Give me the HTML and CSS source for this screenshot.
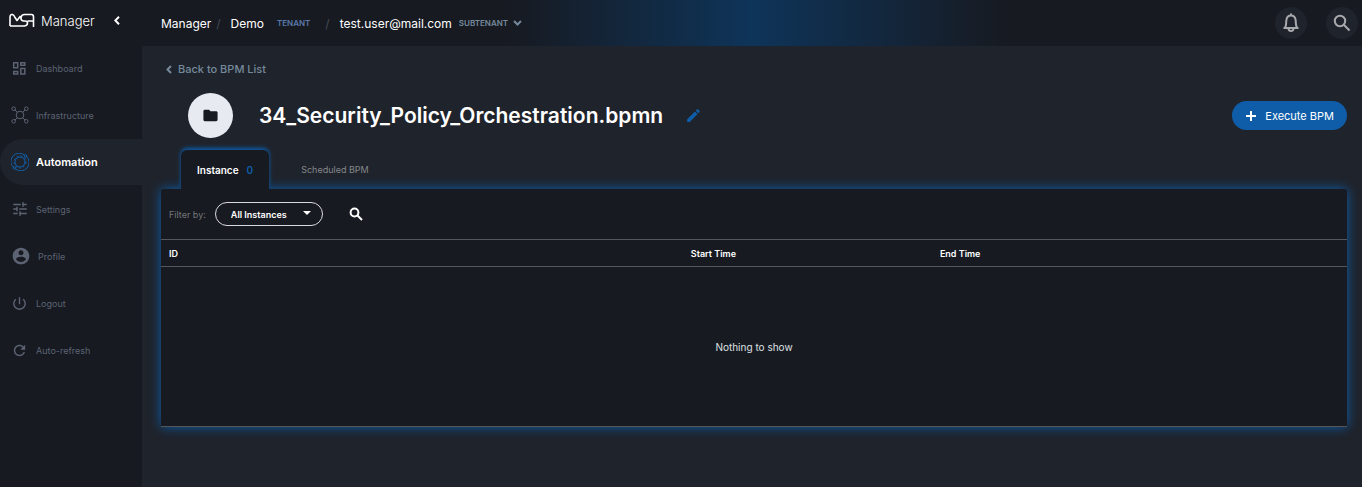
FILE: index.html
```html
<!DOCTYPE html>
<html lang="en">
<head>
<meta charset="utf-8">
<title>34_Security_Policy_Orchestration.bpmn</title>
<link rel="stylesheet" href="styles.css">
</head>
<body>
<div class="app">
  <aside class="sidebar">
    <div class="brand">
      <svg class="brand-logo" width="26" height="16" viewBox="0 0 26 16"><path d="M1 13V4.500Q1 1 3.500 1.500Q5 2 6 4.500L8 7.500L11.500 3M1 13H15.500Q18.500 12.500 18.500 10Q18.500 8 16 8H14.500Q11.500 7.500 12 4.500Q12.500 1.500 15.500 1.500H22.500Q24.500 1.500 24.500 4V14M18.500 8H24"/></svg>
      <span class="brand-name">Manager</span>
      <button class="icon-button collapse" aria-label="Collapse menu"><svg width="6" height="9" viewBox="0 0 6 9"><path d="M5 .8L1.300 4.500L5 8.200"/></svg></button>
    </div>
    <nav class="menu">
      <a class="menu-item" href="#"><span class="menu-icon"><svg class="line" width="15" height="15" viewBox="0 0 15 15"><path d="M1.700 1.700h4v5h-4zM8.800 1.700h4v2.500h-4zM8.800 7.500h4v5.500h-4zM1.700 10.500h4v2.500h-4z"/></svg></span>Dashboard</a>
      <a class="menu-item" href="#"><span class="menu-icon"><svg class="line thin" width="18" height="18" viewBox="0 0 18 18"><circle cx="9" cy="9" r="3.800"/><circle cx="2.700" cy="2.700" r="1.800"/><circle cx="15.300" cy="2.700" r="1.800"/><circle cx="2.700" cy="15.300" r="1.800"/><circle cx="15.300" cy="15.300" r="1.800"/><path d="M4 4l2.300 2.300M14 4l-2.300 2.300M4 14l2.300-2.300M14 14l-2.300-2.300"/></svg></span>Infrastructure</a>
      <a class="menu-item active" href="#" aria-current="page"><span class="menu-icon"><svg class="line thin" width="18" height="18" viewBox="0 0 18 18"><circle cx="9" cy="9" r="5"/><circle class="teeth" cx="9" cy="9" r="6"/><path d="M3 15A8.300 8.300 0 0 1 13.500 2M15 3A8.300 8.300 0 0 1 4.500 16"/><circle cx="14.500" cy="3" r="1.300"/><circle cx="3.500" cy="15" r="1.300"/></svg></span>Automation</a>
      <a class="menu-item" href="#"><span class="menu-icon"><svg width="18" height="18" viewBox="0 0 24 24"><path d="M3 17v2h6v-2H3zM3 5v2h10V5H3zm10 16v-2h8v-2h-8v-2h-2v6h2zM7 9v2H3v2h4v2h2V9H7zm14 4v-2H11v2h10zm-6-4h2V7h4V5h-4V3h-2v6z"/></svg></span>Settings</a>
      <a class="menu-item profile" href="#"><span class="menu-icon"><svg width="20" height="20" viewBox="0 0 24 24"><path d="M12 2C6.480 2 2 6.480 2 12s4.480 10 10 10 10-4.480 10-10S17.520 2 12 2zm0 3c1.660 0 3 1.340 3 3s-1.340 3-3 3-3-1.340-3-3 1.340-3 3-3zm0 14.200c-2.500 0-4.710-1.280-6-3.220.03-1.990 4-3.080 6-3.080 1.990 0 5.970 1.090 6 3.080-1.290 1.940-3.500 3.220-6 3.220z"/></svg></span>Profile</a>
      <a class="menu-item" href="#"><span class="menu-icon"><svg width="17" height="17" viewBox="0 0 24 24"><path d="M13 3h-2v10h2V3zm4.830 2.170l-1.420 1.420C17.990 7.860 19 9.810 19 12c0 3.870-3.130 7-7 7s-7-3.130-7-7c0-2.190 1.010-4.140 2.580-5.420L6.170 5.170C4.230 6.820 3 9.260 3 12c0 4.970 4.030 9 9 9s9-4.030 9-9c0-2.740-1.230-5.180-3.170-6.830z"/></svg></span>Logout</a>
      <a class="menu-item" href="#"><span class="menu-icon"><svg width="17" height="17" viewBox="0 0 24 24"><path d="M17.650 6.350C16.200 4.900 14.210 4 12 4c-4.420 0-7.990 3.580-7.990 8s3.570 8 7.990 8c3.730 0 6.840-2.550 7.730-6h-2.080c-.82 2.330-3.040 4-5.650 4-3.310 0-6-2.690-6-6s2.690-6 6-6c1.660 0 3.140.69 4.220 1.780L13 11h7V4l-2.350 2.350z"/></svg></span>Auto-refresh</a>
    </nav>
  </aside>

  <header class="topbar">
    <nav class="crumbs" aria-label="Breadcrumb">
      <a href="#">Manager</a>
      <span class="slash">/</span>
      <a href="#">Demo</a>
      <span class="tag tenant">TENANT</span>
      <span class="slash">/</span>
      <a href="#">test.user@mail.com</a>
      <button class="icon-button tag subtenant">SUBTENANT<svg width="9" height="6" viewBox="0 0 9 6"><path d="M1 1l3.500 3.500L8 1"/></svg></button>
    </nav>
    <div class="actions">
      <button class="icon-button round" aria-label="Notifications"><svg width="18" height="22" viewBox="0 0 18 22"><path d="M9 1.500v2M1.500 16h15M3 15.700C4.500 14 4 11.500 4.300 8.500C4.600 5.500 6.500 3.600 9 3.600s4.400 1.900 4.700 4.900C14 11.500 13.500 14 15 15.700M6.500 16.500a2.500 2.500 0 0 0 5 0"/></svg></button>
      <button class="icon-button round" aria-label="Search"><svg width="18" height="18" viewBox="0 0 18 18"><circle cx="7" cy="7" r="5.200"/><path d="M10.800 10.800L16.500 16.500"/></svg></button>
    </div>
  </header>

  <main class="content">
    <a class="back" href="#"><svg width="6" height="9" viewBox="0 0 6 9"><path d="M5 1L1.500 4.500L5 8"/></svg>Back to BPM List</a>
    <div class="heading">
      <span class="avatar"><svg width="17" height="17" viewBox="0 0 24 24"><path d="M10 4H4c-1.100 0-2 .9-2 2v12c0 1.100.9 2 2 2h16c1.100 0 2-.9 2-2V8c0-1.100-.9-2-2-2h-8l-2-2z"/></svg></span>
      <h1>34_Security_Policy_Orchestration.bpmn</h1>
      <button class="icon-button edit" aria-label="Edit name"><svg width="17" height="17" viewBox="0 0 24 24"><path d="M3 17.250V21h3.750L17.810 9.940l-3.750-3.750L3 17.250zM20.710 7.040a1 1 0 0 0 0-1.410l-2.340-2.340a1 1 0 0 0-1.410 0l-1.830 1.830 3.750 3.750 1.830-1.830z"/></svg></button>
      <button class="execute"><svg width="10" height="10" viewBox="0 0 10 10"><path d="M5 0v10M0 5h10"/></svg>Execute BPM</button>
    </div>

    <div class="tabs" role="tablist">
      <button class="tab selected" role="tab" aria-selected="true">Instance<span class="count">0</span></button>
      <button class="tab" role="tab" aria-selected="false">Scheduled BPM</button>
    </div>

    <section class="panel">
      <div class="filters">
        <label for="filter">Filter by:</label>
        <div class="select-wrap">
          <select id="filter"><option>All Instances</option></select>
          <svg class="caret" width="8" height="4" viewBox="0 0 8 4"><path d="M0 0h8L4 4z"/></svg>
        </div>
        <button class="icon-button find" aria-label="Search instances"><svg width="14" height="14" viewBox="0 0 14 14"><circle cx="5.500" cy="5.500" r="3.900"/><path d="M8.500 8.500L13 13"/></svg></button>
      </div>
      <table class="grid">
        <thead><tr><th class="col-id">ID</th><th class="col-start">Start Time</th><th>End Time</th></tr></thead>
        <tbody><tr><td colspan="3">Nothing to show</td></tr></tbody>
      </table>
    </section>
  </main>
</div>
</body>
</html>
```
FILE: styles.css
```css
* { box-sizing: border-box; }
body {
  margin: 0;
  background: #1f232b;
  color: #fff;
  font-family: Inter, Roboto, "Liberation Sans", sans-serif;
  font-size: 9px;
}
a { color: inherit; text-decoration: none; }
button, select { font: inherit; color: inherit; }
svg { display: block; flex: none; fill: none; stroke: currentColor; }

.app {
  display: grid;
  grid-template-columns: 142px 1fr;
  grid-template-rows: 46px 1fr;
  min-height: 100vh;
}
.icon-button {
  display: flex;
  align-items: center;
  justify-content: center;
  padding: 0;
  border: 0;
  background: none;
  cursor: pointer;
}

.sidebar { grid-row: 1 / 3; background: #171a21; }
.brand { display: flex; align-items: center; height: 41px; padding-left: 9px; }
.brand-logo { stroke-width: 1.6; stroke-linejoin: round; }
.brand-name { margin-left: 6px; font-size: 13px; font-weight: 300; }
.collapse { margin: 0 22px 0 auto; }
.collapse svg { stroke-width: 2; }
.menu { display: flex; flex-direction: column; gap: 1px; padding-top: 4px; }
.menu-item {
  display: flex;
  align-items: center;
  height: 46px;
  padding-left: 10px;
  color: #5c6373;
}
.menu-icon { display: flex; justify-content: center; width: 19px; margin-right: 7px; }
.menu-icon svg { fill: currentColor; stroke: none; }
.menu-icon .line { fill: none; stroke: currentColor; stroke-width: 1.5; }
.menu-icon .thin { stroke-width: 1; }
.menu-item.profile { padding-left: 11px; }
.menu-item.profile .menu-icon { margin-right: 8px; }
.menu-item.active {
  border-radius: 23px 0 0 23px;
  background: #1f232b;
  color: #fff;
  font-size: 11px;
  font-weight: 600;
}
.menu-item.active .menu-icon { color: #1261ab; }
.menu-icon .teeth { stroke-dasharray: 2 2; }

.topbar {
  display: flex;
  align-items: center;
  justify-content: space-between;
  padding: 0 4px 0 19px;
  background: linear-gradient(90deg, transparent 30%, #0e3459 50%, transparent 71%) #171a21;
}
.crumbs { display: flex; align-items: center; font-size: 12px; }
.slash { margin: 0 10px 0 5px; color: #454a53; }
.tag { font-size: 8px; font-weight: 600; }
.tenant { margin: 0 10px 0 13px; color: #5c78ab; }
.subtenant { gap: 5px; margin-left: 7px; color: #75899b; }
.subtenant svg { stroke-width: 2; }
.actions { display: flex; align-items: center; gap: 19px; }
.round { width: 32px; height: 32px; border-radius: 50%; background: #1f232b; color: #a7a9ad; }
.round svg { stroke-width: 2; }

.content { display: flex; flex-direction: column; padding: 15px 15px 60px 19px; }
.back {
  display: flex;
  align-items: center;
  align-self: flex-start;
  gap: 6px;
  height: 16px;
  margin-left: 5px;
  color: #75899b;
  font-size: 11px;
  font-weight: 500;
}
.back svg { stroke-width: 2; }
.heading { display: flex; align-items: center; margin-top: 16px; padding-left: 27px; }
.avatar {
  display: flex;
  align-items: center;
  justify-content: center;
  width: 45px;
  height: 45px;
  border-radius: 50%;
  background: #e7eaf0;
  color: #171a21;
}
.avatar svg, .edit svg, .caret { fill: currentColor; stroke: none; }
h1 { margin: 0 22px 0 26px; font-size: 21px; font-weight: 600; }
.edit { color: #0f5da9; }
.execute {
  display: flex;
  align-items: center;
  gap: 9px;
  height: 29px;
  margin-left: auto;
  padding: 0 13px 0 14px;
  border: 0;
  border-radius: 15px;
  background: #0f5da9;
  font-size: 11px;
  cursor: pointer;
}
.execute svg { stroke-width: 2; }

.tabs { position: relative; z-index: 1; display: flex; height: 39px; margin-top: 12px; padding-left: 20px; }
.tab {
  padding: 0 16px;
  border: 0;
  background: none;
  color: #84878c;
  cursor: pointer;
}
.tab + .tab { margin-left: 16px; }
.tab.selected {
  border-radius: 6px 6px 0 0;
  background: #171a21;
  box-shadow: 0 -2px 4px #0d5eac;
  clip-path: inset(-12px -12px 0 -12px);
  color: #fff;
  font-size: 10px;
  font-weight: 600;
}
.count { margin-left: 8px; color: #0f5da9; }

.panel { border-radius: 3px 3px 0 0; background: #171a21; box-shadow: 0 0 12px #0d5eac; }
.filters { display: flex; align-items: center; height: 50px; padding-left: 8px; color: #74777c; }
.select-wrap { position: relative; margin-left: 9px; color: #fff; }
.select-wrap select {
  display: block;
  appearance: none;
  width: 108px;
  height: 24px;
  padding: 0 28px 0 15px;
  border: 1px solid #d9dade;
  border-radius: 12px;
  background: none;
  font-weight: 600;
}
.caret { position: absolute; top: 9px; right: 12px; pointer-events: none; }
.find { margin-left: 26px; color: #fff; }
.find svg { stroke-width: 2; }
.grid { width: 100%; border-collapse: collapse; table-layout: fixed; }
.grid th {
  height: 27px;
  padding: 0 8px;
  border: solid #53565b;
  border-width: 1px 0;
  font-weight: 600;
  text-align: left;
}
.col-id { width: 44%; }
.col-start { width: 21%; }
.grid td {
  height: 160px;
  padding: 0;
  border-bottom: 1px solid #53565b;
  color: #dfe0e2;
  font-size: 10px;
  text-align: center;
}
```
